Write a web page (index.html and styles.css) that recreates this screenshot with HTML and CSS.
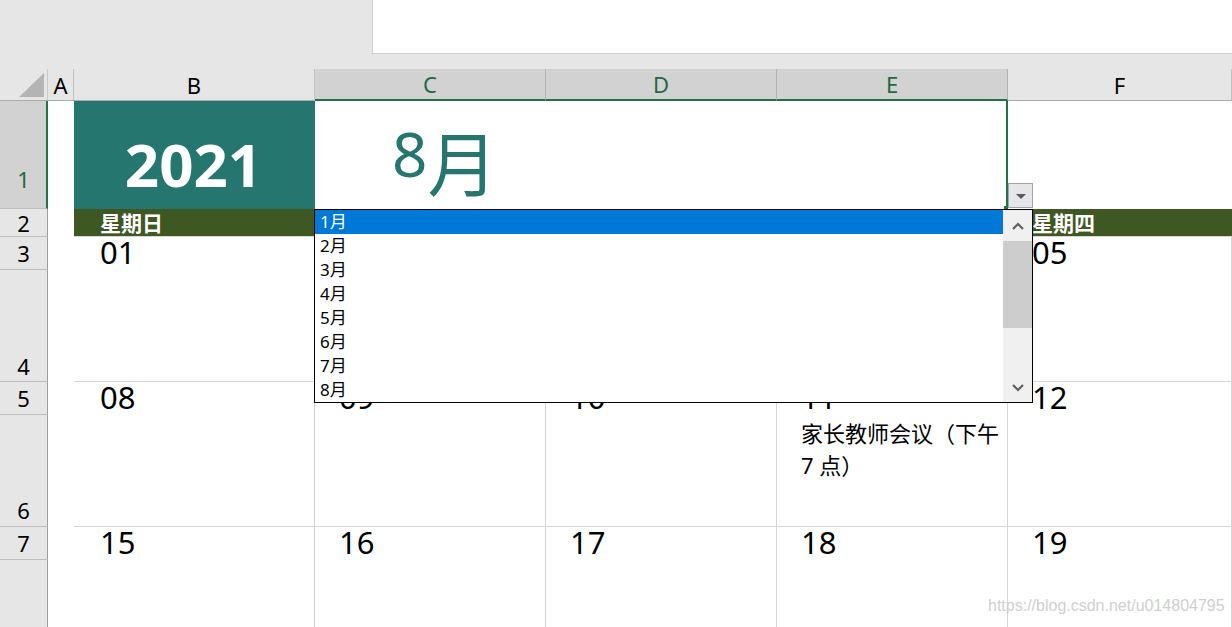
FILE: index.html
```html
<!DOCTYPE html>
<html lang="zh-CN">
<head>
<meta charset="utf-8">
<title>2021 日历</title>
<link rel="stylesheet" href="styles.css">
</head>
<body>
<div class="topbar">
  <div class="topbar-left"></div>
  <div class="formula"></div>
</div>
<div class="sheet">
  <div class="corner">
    <svg width="25" height="24" viewBox="0 0 25 24"><polygon points="25,0 25,24 0,24" fill="#b4b4b4"/></svg>
  </div>
  <div class="hcell col-a">A</div>
  <div class="hcell col-b">B</div>
  <div class="hcell hsel col-c">C</div>
  <div class="hcell hsel col-d">D</div>
  <div class="hcell hsel col-e">E</div>
  <div class="hcell col-f">F</div>

  <div class="rh rh-sel rh-tall row-1">1</div>
  <div class="rh row-2">2</div>
  <div class="rh row-3">3</div>
  <div class="rh rh-tall row-4">4</div>
  <div class="rh row-5">5</div>
  <div class="rh rh-tall row-6">6</div>
  <div class="rh row-7">7</div>
  <div class="rh row-8"></div>

  <div class="year">2021</div>
  <div class="month">8<span class="unit">月</span></div>

  <div class="wd col-b">星期日</div>
  <div class="wd col-c">星期一</div>
  <div class="wd col-d">星期二</div>
  <div class="wd col-e">星期三</div>
  <div class="wd col-f">星期四</div>

  <div class="day wk-1 col-b first"><div class="num">01</div></div>
  <div class="day wk-1 col-c"><div class="num">02</div></div>
  <div class="day wk-1 col-d"><div class="num">03</div></div>
  <div class="day wk-1 col-e"><div class="num">04</div></div>
  <div class="day wk-1 col-f"><div class="num">05</div></div>

  <div class="day wk-2 col-b first"><div class="num">08</div></div>
  <div class="day wk-2 col-c"><div class="num">09</div></div>
  <div class="day wk-2 col-d"><div class="num">10</div></div>
  <div class="day wk-2 col-e"><div class="num">11</div><div class="note">家长教师会议（下午 7 点）</div></div>
  <div class="day wk-2 col-f"><div class="num">12</div></div>

  <div class="day wk-3 col-b first"><div class="num">15</div></div>
  <div class="day wk-3 col-c"><div class="num">16</div></div>
  <div class="day wk-3 col-d"><div class="num">17</div></div>
  <div class="day wk-3 col-e"><div class="num">18</div></div>
  <div class="day wk-3 col-f"><div class="num">19</div></div>

  <div class="handle"></div>
  <div class="dd-btn">
    <svg width="10" height="5" viewBox="0 0 10 5"><polygon points="0,0 10,0 5,5" fill="#5a5a5a"/></svg>
  </div>

  <div class="dd">
    <ul class="dd-list">
      <li class="dd-item active">1月</li>
      <li class="dd-item">2月</li>
      <li class="dd-item">3月</li>
      <li class="dd-item">4月</li>
      <li class="dd-item">5月</li>
      <li class="dd-item">6月</li>
      <li class="dd-item">7月</li>
      <li class="dd-item">8月</li>
    </ul>
    <div class="scroll">
      <div class="sb-btn sb-up">
        <svg width="12" height="8" viewBox="0 0 12 8"><polyline points="1,7 6,2 11,7" fill="none" stroke="#606060" stroke-width="2.2"/></svg>
      </div>
      <div class="thumb"></div>
      <div class="track"></div>
      <div class="sb-btn sb-down">
        <svg width="12" height="8" viewBox="0 0 12 8"><polyline points="1,1 6,6 11,1" fill="none" stroke="#606060" stroke-width="2.2"/></svg>
      </div>
    </div>
  </div>

  <div class="watermark">https://blog.csdn.net/u014804795</div>
</div>
</body>
</html>
```

FILE: styles.css
```css
* { box-sizing: border-box; }
html, body { margin: 0; padding: 0; }
body {
  width: 1232px;
  height: 627px;
  overflow: hidden;
  background: #fff;
  color: #000;
  font-family: "Noto Sans", "Noto Sans CJK SC", sans-serif;
}

.topbar {
  height: 69px;
  background: #e6e6e6;
  display: flex;
  align-items: flex-start;
}
.topbar-left { flex: 0 0 372px; }
.formula {
  flex: 1;
  height: 54px;
  background: #fff;
  border-left: 1px solid #d0d0d0;
  border-bottom: 1px solid #d0d0d0;
}

.sheet {
  position: relative;
  height: 558px;
  display: grid;
  grid-template-columns: 48px 26px 241px 231px 231px 231px 1fr;
  grid-template-rows: 32px 108px 28px 33px 112px 33px 112px 33px 1fr;
}

/* column placement */
.col-a { grid-column: 2; }
.col-b { grid-column: 3; }
.col-c { grid-column: 4; }
.col-d { grid-column: 5; }
.col-e { grid-column: 6; }
.col-f { grid-column: 7; }

/* header row */
.corner {
  grid-column: 1;
  grid-row: 1;
  background: #e6e6e6;
  border-right: 1px solid #c8c8c8;
  border-bottom: 1px solid #ababab;
  display: flex;
  justify-content: flex-end;
  align-items: flex-end;
  padding: 0 3px 3px 0;
}
.corner svg { display: block; }
.hcell {
  grid-row: 1;
  background: #e6e6e6;
  border-right: 1px solid #c2c2c2;
  border-bottom: 1px solid #ababab;
  display: flex;
  justify-content: center;
  align-items: center;
  font-size: 22px;
  line-height: 1;
}
.hcell.hsel {
  background: #d2d2d2;
  color: #1d6b40;
  border-right-color: #b4b4b4;
  border-bottom: 2px solid #217346;
}

/* row headers */
.rh {
  grid-column: 1;
  background: #e6e6e6;
  border-right: 1px solid #9e9e9e;
  border-bottom: 1px solid #bdbdbd;
  display: flex;
  justify-content: center;
  align-items: center;
  font-size: 22px;
  line-height: 28px;
}
.rh-tall { align-items: flex-end; }
.rh-sel {
  background: #d2d2d2;
  color: #1d6b40;
  border-right: 2px solid #217346;
  padding-left: 1px;
}
.row-1 { grid-row: 2; padding-bottom: 15px; }
.row-2 { grid-row: 3; }
.row-3 { grid-row: 4; }
.row-4 { grid-row: 5; padding-bottom: 1px; }
.row-5 { grid-row: 6; }
.row-6 { grid-row: 7; padding-bottom: 2px; }
.row-7 { grid-row: 8; }
.row-8 { grid-row: 9; border-bottom: none; }

/* title row */
.year {
  grid-column: 3;
  grid-row: 2;
  background: #24766f;
  color: #fff;
  font-weight: 700;
  font-size: 60px;
  line-height: 60px;
  text-align: center;
  padding: 33px 2px 0 0;
}
.month {
  grid-column: 4 / 7;
  grid-row: 2;
  color: #24766f;
  font-size: 62px;
  line-height: 62px;
  padding: 21px 0 0 77px;
  border-right: 2px solid #217346;
  white-space: nowrap;
}
.unit {
  font-family: "Noto Sans CJK SC", sans-serif;
  font-size: 70px;
  vertical-align: -14px;
}

/* weekday row */
.wd {
  grid-row: 3;
  background: #3e5723;
  color: #fff;
  font-family: "Noto Sans CJK SC", sans-serif;
  font-weight: 700;
  font-size: 21px;
  line-height: 27px;
  padding-left: 24px;
  border-bottom: 1px solid #d6d6d6;
}
.wd.col-b { padding-left: 26px; }

/* day blocks */
.wk-1 { grid-row: 4 / 6; }
.wk-2 { grid-row: 6 / 8; }
.wk-3 { grid-row: 8 / 10; }
.day {
  border-right: 1px solid #d6d6d6;
  border-bottom: 1px solid #d6d6d6;
  padding-left: 24px;
}
.day.first { padding-left: 26px; }
.wk-3 { border-bottom: none; }
.num {
  height: 33px;
  font-size: 31px;
  line-height: 30px;
}
.note {
  margin-top: 2px;
  padding-right: 2px;
  font-family: "Noto Sans", "Noto Sans CJK SC", sans-serif;
  font-size: 22px;
  line-height: 32px;
}

/* overlays: data-validation dropdown */
.handle {
  position: absolute;
  left: 1004px;
  top: 137px;
  width: 4px;
  height: 4px;
  background: #217346;
}
.dd-btn {
  position: absolute;
  left: 1008px;
  top: 114px;
  width: 25px;
  height: 25px;
  background: #e6e6ea;
  border: 1px solid #a3a3a3;
  display: flex;
  justify-content: center;
  align-items: center;
}
.dd-btn svg { display: block; margin-top: 1px; }
.dd {
  position: absolute;
  left: 314px;
  top: 140px;
  width: 719px;
  height: 194px;
  background: #fff;
  border: 1px solid #000;
  display: flex;
}
.dd-list {
  flex: 1;
  list-style: none;
  margin: 0;
  padding: 0;
  font-size: 17px;
  line-height: 24px;
}
.dd-item {
  height: 24px;
  padding-left: 5px;
}
.dd-item.active {
  background: #0078d7;
  color: #fff;
}
.scroll {
  width: 29px;
  background: #f0f0f0;
  display: flex;
  flex-direction: column;
}
.sb-btn {
  display: flex;
  justify-content: center;
  align-items: center;
}
.sb-btn svg { display: block; }
.sb-up { height: 31px; }
.thumb {
  height: 87px;
  background: #cdcdcd;
}
.track { flex: 1; }
.sb-down { height: 28px; }

.watermark {
  position: absolute;
  left: 988px;
  top: 527px;
  font-family: "Liberation Sans", sans-serif;
  font-size: 16px;
  line-height: 20px;
  color: #cfcfcf;
  white-space: nowrap;
}
```
